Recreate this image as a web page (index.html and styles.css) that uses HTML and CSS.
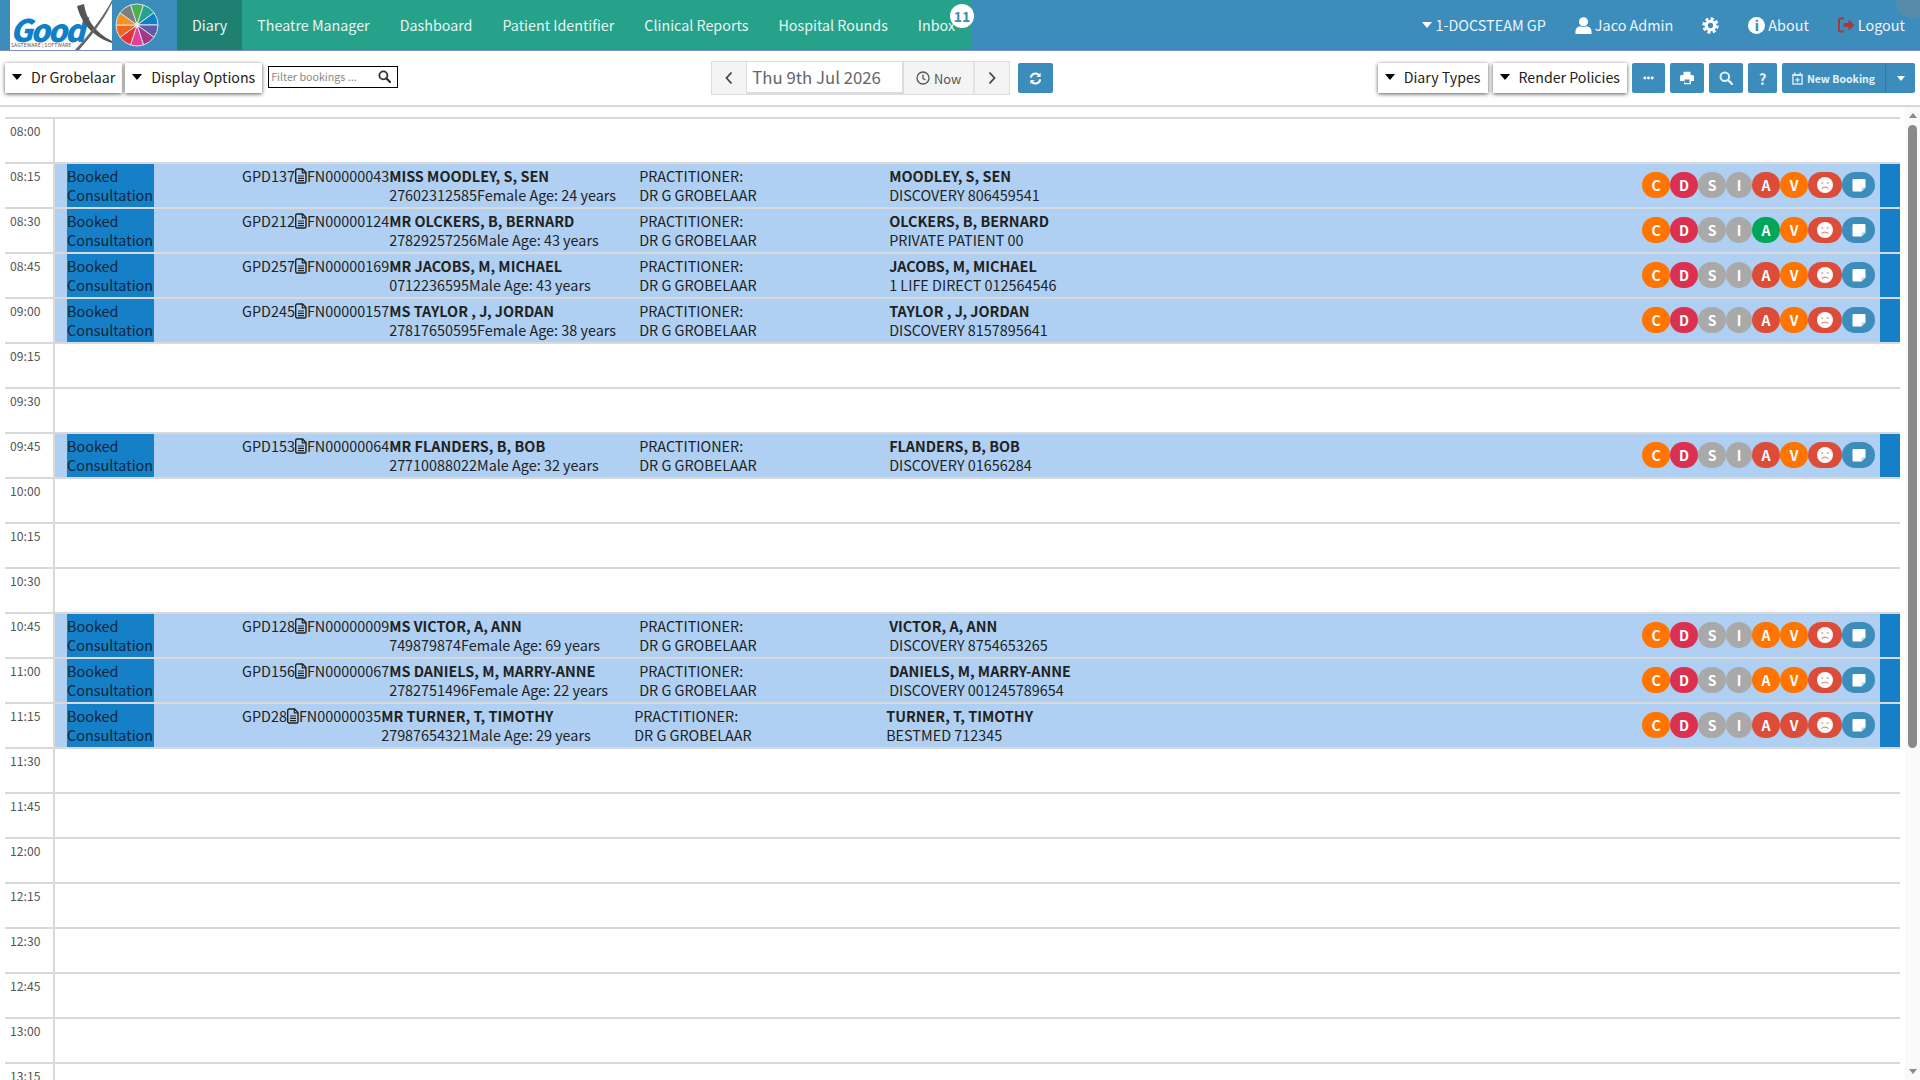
FILE: index.html
```html
<!DOCTYPE html>
<html lang="en">
<head>
    <meta charset="UTF-8">
    <meta name="viewport" content="width=device-width, initial-scale=1.0">
    <title>GoodX Diary</title>
    <link rel="stylesheet" href="styles.css">
</head>
<body>
    <svg class="icon-defs" xmlns="http://www.w3.org/2000/svg">
        <symbol id="i-file" viewBox="0 0 12 16">
            <path d="M2 1h5.500L11 4.500V13.500a1.500 1.500 0 0 1-1.500 1.500H2A1.500 1.500 0 0 1 .7 13.500V2.500A1.500 1.500 0 0 1 2 1z" fill="none" stroke="currentColor" stroke-width="1.400"/>
            <path d="M7.300 1v3.800H11M3 8h6M3 10.300h6M3 12.600h6" fill="none" stroke="currentColor" stroke-width="1.200"/>
        </symbol>
        <symbol id="i-sad" viewBox="0 0 16 16">
            <circle cx="8" cy="8" r="8" fill="#fff"/>
            <circle cx="5.300" cy="6" r="1.100" fill="#e8a89e"/>
            <circle cx="10.700" cy="6" r="1.100" fill="#e8a89e"/>
            <path d="M4.600 11.600c1.800-2 5-2 6.800 0" fill="none" stroke="#e08a7c" stroke-width="1.200"/>
        </symbol>
        <symbol id="i-note" viewBox="0 0 14 14">
            <path d="M1.500 1h11a1 1 0 0 1 1 1v7.500L9.500 13.500H1.500a1 1 0 0 1-1-1V2a1 1 0 0 1 1-1z" fill="#fff"/>
            <path d="M13.500 9.500H10.500a1 1 0 0 0-1 1v3z" fill="#b5d3ee"/>
        </symbol>
        <symbol id="i-search" viewBox="0 0 14 14">
            <circle cx="5.800" cy="5.800" r="4.300" fill="none" stroke="currentColor" stroke-width="2"/>
            <path d="M9 9l4 4" stroke="currentColor" stroke-width="2.400" stroke-linecap="round"/>
        </symbol>
    </svg>

    <header class="topbar">
        <div class="brand">
            <div class="logo">
                <span class="logo-good">Good</span>
                <span class="logo-sub">SAGTEWARE | SOFTWARE</span>
                <svg class="logo-x" viewBox="0 0 64 50" xmlns="http://www.w3.org/2000/svg">
                    <path d="M17 6L24 4C26 18 34 32 52 41L52 43C36 38 22 26 17 6z" fill="#555"/>
                    <path d="M52 0C44 16 28 36 15 50L19 50C30 38 44 20 53 1z" fill="#666"/>
                </svg>
            </div>
            <svg class="wheel" viewBox="0 0 44 44" xmlns="http://www.w3.org/2000/svg">
                <g stroke="#d8e4ea" stroke-width="1">
                    <path d="M22 22L15.510 2.030A21 21 0 0 1 28.490 2.030z" fill="#4caf50"/>
                    <path d="M22 22L28.490 2.030A21 21 0 0 1 38.990 9.650z" fill="#26a28b"/>
                    <path d="M22 22L38.990 9.650A21 21 0 0 1 43 22z" fill="#0f80c8"/>
                    <path d="M22 22L43 22A21 21 0 0 1 38.990 34.350z" fill="#5f5ba8"/>
                    <path d="M22 22L38.990 34.350A21 21 0 0 1 28.490 41.970z" fill="#a0388a"/>
                    <path d="M22 22L28.490 41.970A21 21 0 0 1 15.510 41.970z" fill="#e83e9a"/>
                    <path d="M22 22L15.510 41.970A21 21 0 0 1 5.010 34.350z" fill="#e5343a"/>
                    <path d="M22 22L5.010 34.350A21 21 0 0 1 1 22z" fill="#f4661f"/>
                    <path d="M22 22L1 22A21 21 0 0 1 5.010 9.650z" fill="#f4931f"/>
                    <path d="M22 22L5.010 9.650A21 21 0 0 1 15.510 2.030z" fill="#7d7d7d"/>
                </g>
                <circle cx="22" cy="22" r="2.500" fill="#e6e6e6"/>
            </svg>
        </div>
        <nav class="main-nav">
            <a class="nav-link active">Diary</a>
            <a class="nav-link">Theatre Manager</a>
            <a class="nav-link">Dashboard</a>
            <a class="nav-link">Patient Identifier</a>
            <a class="nav-link">Clinical Reports</a>
            <a class="nav-link">Hospital Rounds</a>
            <a class="nav-link inbox">Inbox<span class="badge">11</span></a>
        </nav>
        <div class="user-nav">
            <a class="user-link"><span class="caret caret-white"></span>1-DOCSTEAM GP</a>
            <a class="user-link">
                <svg class="user-icon" viewBox="0 0 18 18" xmlns="http://www.w3.org/2000/svg"><circle cx="9" cy="5" r="4.800" fill="#fff"/><path d="M.5 18v-2.500C.5 12 3 10 5.500 9.800c2 1 5 1 7 0 2.500.2 5 2.200 5 5.700V18z" fill="#fff"/></svg>
                Jaco Admin
            </a>
            <a class="user-link">
                <svg class="gear-icon" viewBox="0 0 18 18" xmlns="http://www.w3.org/2000/svg"><circle cx="9" cy="9" r="4.500" fill="none" stroke="#fff" stroke-width="3.400"/><circle cx="9" cy="9" r="7.200" fill="none" stroke="#fff" stroke-width="3" stroke-dasharray="3.200 2.450"/></svg>
            </a>
            <a class="user-link"><span class="info-icon">i</span>About</a>
            <a class="user-link">
                <svg class="logout-icon" viewBox="0 0 17 16" xmlns="http://www.w3.org/2000/svg"><path d="M6 1.500H2.500A1.500 1.500 0 0 0 1 3v10a1.500 1.500 0 0 0 1.500 1.500H6" fill="none" stroke="#a8383a" stroke-width="2"/><path d="M5.500 6h5V2.500L16.500 8l-6 5.500V10h-5z" fill="#a8383a"/></svg>
                Logout
            </a>
        </div>
        <span class="corner-blob"></span>
    </header>

    <section class="toolbar">
        <div class="tool-group">
            <button class="drop-btn"><span class="caret"></span>Dr Grobelaar</button>
            <button class="drop-btn"><span class="caret"></span>Display Options</button>
            <div class="filter-box">
                <span class="filter-text">Filter bookings ...</span>
                <svg class="filter-icon"><use href="#i-search"/></svg>
            </div>
        </div>
        <div class="date-group">
            <div class="date-nav">
                <button class="date-arrow">
                    <svg viewBox="0 0 8 14" xmlns="http://www.w3.org/2000/svg"><path d="M6.500 1.500L1.500 7l5 5.500" fill="none" stroke="#444" stroke-width="1.800"/></svg>
                </button>
                <div class="date-value">Thu 9th Jul 2026</div>
                <button class="date-now">
                    <svg viewBox="0 0 14 14" xmlns="http://www.w3.org/2000/svg"><circle cx="7" cy="7" r="6" fill="none" stroke="#555" stroke-width="1.300"/><path d="M7 3.500V7.500L9.500 9" fill="none" stroke="#555" stroke-width="1.300"/></svg>
                    Now
                </button>
                <button class="date-arrow">
                    <svg viewBox="0 0 8 14" xmlns="http://www.w3.org/2000/svg"><path d="M1.500 1.500L6.500 7l-5 5.500" fill="none" stroke="#444" stroke-width="1.800"/></svg>
                </button>
            </div>
            <button class="blue-btn refresh-btn">
                <svg viewBox="0 0 14 14" xmlns="http://www.w3.org/2000/svg"><path d="M2 6a5 5 0 0 1 8.600-2.800M12 8a5 5 0 0 1-8.600 2.800" fill="none" stroke="#fff" stroke-width="2.200"/><path d="M12.500.8V5.500H8zM1.500 13.200V8.500H6z" fill="#fff"/></svg>
            </button>
        </div>
        <div class="tool-group tool-right">
            <button class="drop-btn"><span class="caret"></span>Diary Types</button>
            <button class="drop-btn"><span class="caret"></span>Render Policies</button>
            <button class="blue-btn more-btn">
                <svg viewBox="0 0 12 4" xmlns="http://www.w3.org/2000/svg"><circle cx="2" cy="2" r="1.600" fill="#fff"/><circle cx="6" cy="2" r="1.600" fill="#fff"/><circle cx="10" cy="2" r="1.600" fill="#fff"/></svg>
            </button>
            <button class="blue-btn print-btn">
                <svg viewBox="0 0 14 14" xmlns="http://www.w3.org/2000/svg"><path d="M3.500 4V.8h7V4h2A1.500 1.500 0 0 1 14 5.500V10h-3v3.200H4V10H0V5.500A1.500 1.500 0 0 1 1.500 4zM4.500 8.500V12h5V8.500z" fill="#fff" fill-rule="evenodd"/></svg>
            </button>
            <button class="blue-btn search-btn"><svg><use href="#i-search"/></svg></button>
            <button class="blue-btn help-btn">?</button>
            <div class="split-btn">
                <button class="blue-btn new-btn">
                    <svg viewBox="0 0 12 14" xmlns="http://www.w3.org/2000/svg"><path d="M1 3h10v10H1z" fill="none" stroke="#d5e6f1" stroke-width="1.600"/><path d="M3 .5v3M9 .5v3M1 3.500h10" stroke="#d5e6f1" stroke-width="1.600"/><path d="M6 6v5M3.500 8.500h5" stroke="#d5e6f1" stroke-width="1.500"/></svg>
                    New Booking
                </button>
                <button class="blue-btn new-caret"><span class="caret caret-white"></span></button>
            </div>
        </div>
    </section>

    <main class="diary-area">
        <div class="diary">
            <div class="slot"><div class="time">08:00</div><div class="slot-body"></div></div>

            <div class="slot">
                <div class="time">08:15</div>
                <div class="slot-body booking">
                    <div class="status">Booked<br>Consultation</div>
                    <div class="file-no">GPD137<svg class="file-icon"><use href="#i-file"/></svg>FN00000043</div>
                    <div class="patient"><strong>MISS MOODLEY, S, SEN</strong><br>27602312585Female Age: 24 years</div>
                    <div class="doctor">PRACTITIONER:<br>DR G GROBELAAR</div>
                    <div class="account"><strong>MOODLEY, S, SEN</strong><br>DISCOVERY 806459541</div>
                    <div class="chips">
                        <span class="chip orange">C</span><span class="chip crimson">D</span><span class="chip grey">S</span><span class="chip grey chip-i">I</span><span class="chip red">A</span><span class="chip orange">V</span><span class="chip red chip-face"><svg><use href="#i-sad"/></svg></span><span class="chip blue chip-note"><svg><use href="#i-note"/></svg></span>
                    </div>
                    <div class="end-bar"></div>
                </div>
            </div>

            <div class="slot">
                <div class="time">08:30</div>
                <div class="slot-body booking">
                    <div class="status">Booked<br>Consultation</div>
                    <div class="file-no">GPD212<svg class="file-icon"><use href="#i-file"/></svg>FN00000124</div>
                    <div class="patient"><strong>MR OLCKERS, B, BERNARD</strong><br>27829257256Male Age: 43 years</div>
                    <div class="doctor">PRACTITIONER:<br>DR G GROBELAAR</div>
                    <div class="account"><strong>OLCKERS, B, BERNARD</strong><br>PRIVATE PATIENT 00</div>
                    <div class="chips">
                        <span class="chip orange">C</span><span class="chip crimson">D</span><span class="chip grey">S</span><span class="chip grey chip-i">I</span><span class="chip green">A</span><span class="chip orange">V</span><span class="chip red chip-face"><svg><use href="#i-sad"/></svg></span><span class="chip blue chip-note"><svg><use href="#i-note"/></svg></span>
                    </div>
                    <div class="end-bar"></div>
                </div>
            </div>

            <div class="slot">
                <div class="time">08:45</div>
                <div class="slot-body booking">
                    <div class="status">Booked<br>Consultation</div>
                    <div class="file-no">GPD257<svg class="file-icon"><use href="#i-file"/></svg>FN00000169</div>
                    <div class="patient"><strong>MR JACOBS, M, MICHAEL</strong><br>0712236595Male Age: 43 years</div>
                    <div class="doctor">PRACTITIONER:<br>DR G GROBELAAR</div>
                    <div class="account"><strong>JACOBS, M, MICHAEL</strong><br>1 LIFE DIRECT 012564546</div>
                    <div class="chips">
                        <span class="chip orange">C</span><span class="chip crimson">D</span><span class="chip grey">S</span><span class="chip grey chip-i">I</span><span class="chip red">A</span><span class="chip orange">V</span><span class="chip red chip-face"><svg><use href="#i-sad"/></svg></span><span class="chip blue chip-note"><svg><use href="#i-note"/></svg></span>
                    </div>
                    <div class="end-bar"></div>
                </div>
            </div>

            <div class="slot">
                <div class="time">09:00</div>
                <div class="slot-body booking">
                    <div class="status">Booked<br>Consultation</div>
                    <div class="file-no">GPD245<svg class="file-icon"><use href="#i-file"/></svg>FN00000157</div>
                    <div class="patient"><strong>MS TAYLOR , J, JORDAN</strong><br>27817650595Female Age: 38 years</div>
                    <div class="doctor">PRACTITIONER:<br>DR G GROBELAAR</div>
                    <div class="account"><strong>TAYLOR , J, JORDAN</strong><br>DISCOVERY 8157895641</div>
                    <div class="chips">
                        <span class="chip orange">C</span><span class="chip crimson">D</span><span class="chip grey">S</span><span class="chip grey chip-i">I</span><span class="chip red">A</span><span class="chip orange">V</span><span class="chip red chip-face"><svg><use href="#i-sad"/></svg></span><span class="chip blue chip-note"><svg><use href="#i-note"/></svg></span>
                    </div>
                    <div class="end-bar"></div>
                </div>
            </div>

            <div class="slot"><div class="time">09:15</div><div class="slot-body"></div></div>
            <div class="slot"><div class="time">09:30</div><div class="slot-body"></div></div>

            <div class="slot">
                <div class="time">09:45</div>
                <div class="slot-body booking">
                    <div class="status">Booked<br>Consultation</div>
                    <div class="file-no">GPD153<svg class="file-icon"><use href="#i-file"/></svg>FN00000064</div>
                    <div class="patient"><strong>MR FLANDERS, B, BOB</strong><br>27710088022Male Age: 32 years</div>
                    <div class="doctor">PRACTITIONER:<br>DR G GROBELAAR</div>
                    <div class="account"><strong>FLANDERS, B, BOB</strong><br>DISCOVERY 01656284</div>
                    <div class="chips">
                        <span class="chip orange">C</span><span class="chip crimson">D</span><span class="chip grey">S</span><span class="chip grey chip-i">I</span><span class="chip red">A</span><span class="chip orange">V</span><span class="chip red chip-face"><svg><use href="#i-sad"/></svg></span><span class="chip blue chip-note"><svg><use href="#i-note"/></svg></span>
                    </div>
                    <div class="end-bar"></div>
                </div>
            </div>

            <div class="slot"><div class="time">10:00</div><div class="slot-body"></div></div>
            <div class="slot"><div class="time">10:15</div><div class="slot-body"></div></div>
            <div class="slot"><div class="time">10:30</div><div class="slot-body"></div></div>

            <div class="slot">
                <div class="time">10:45</div>
                <div class="slot-body booking">
                    <div class="status">Booked<br>Consultation</div>
                    <div class="file-no">GPD128<svg class="file-icon"><use href="#i-file"/></svg>FN00000009</div>
                    <div class="patient"><strong>MS VICTOR, A, ANN</strong><br>749879874Female Age: 69 years</div>
                    <div class="doctor">PRACTITIONER:<br>DR G GROBELAAR</div>
                    <div class="account"><strong>VICTOR, A, ANN</strong><br>DISCOVERY 8754653265</div>
                    <div class="chips">
                        <span class="chip orange">C</span><span class="chip crimson">D</span><span class="chip grey">S</span><span class="chip grey chip-i">I</span><span class="chip orange">A</span><span class="chip orange">V</span><span class="chip red chip-face"><svg><use href="#i-sad"/></svg></span><span class="chip blue chip-note"><svg><use href="#i-note"/></svg></span>
                    </div>
                    <div class="end-bar"></div>
                </div>
            </div>

            <div class="slot">
                <div class="time">11:00</div>
                <div class="slot-body booking">
                    <div class="status">Booked<br>Consultation</div>
                    <div class="file-no">GPD156<svg class="file-icon"><use href="#i-file"/></svg>FN00000067</div>
                    <div class="patient"><strong>MS DANIELS, M, MARRY-ANNE</strong><br>2782751496Female Age: 22 years</div>
                    <div class="doctor">PRACTITIONER:<br>DR G GROBELAAR</div>
                    <div class="account"><strong>DANIELS, M, MARRY-ANNE</strong><br>DISCOVERY 001245789654</div>
                    <div class="chips">
                        <span class="chip orange">C</span><span class="chip crimson">D</span><span class="chip grey">S</span><span class="chip grey chip-i">I</span><span class="chip orange">A</span><span class="chip orange">V</span><span class="chip red chip-face"><svg><use href="#i-sad"/></svg></span><span class="chip blue chip-note"><svg><use href="#i-note"/></svg></span>
                    </div>
                    <div class="end-bar"></div>
                </div>
            </div>

            <div class="slot">
                <div class="time">11:15</div>
                <div class="slot-body booking">
                    <div class="status">Booked<br>Consultation</div>
                    <div class="file-no">GPD28<svg class="file-icon"><use href="#i-file"/></svg>FN00000035</div>
                    <div class="patient patient-wide"><strong>MR TURNER, T, TIMOTHY</strong><br>27987654321Male Age: 29 years</div>
                    <div class="doctor doctor-wide">PRACTITIONER:<br>DR G GROBELAAR</div>
                    <div class="account"><strong>TURNER, T, TIMOTHY</strong><br>BESTMED 712345</div>
                    <div class="chips">
                        <span class="chip orange">C</span><span class="chip crimson">D</span><span class="chip grey">S</span><span class="chip grey chip-i">I</span><span class="chip red">A</span><span class="chip red">V</span><span class="chip red chip-face"><svg><use href="#i-sad"/></svg></span><span class="chip blue chip-note"><svg><use href="#i-note"/></svg></span>
                    </div>
                    <div class="end-bar"></div>
                </div>
            </div>

            <div class="slot"><div class="time">11:30</div><div class="slot-body"></div></div>
            <div class="slot"><div class="time">11:45</div><div class="slot-body"></div></div>
            <div class="slot"><div class="time">12:00</div><div class="slot-body"></div></div>
            <div class="slot"><div class="time">12:15</div><div class="slot-body"></div></div>
            <div class="slot"><div class="time">12:30</div><div class="slot-body"></div></div>
            <div class="slot"><div class="time">12:45</div><div class="slot-body"></div></div>
            <div class="slot"><div class="time">13:00</div><div class="slot-body"></div></div>
            <div class="slot"><div class="time">13:15</div><div class="slot-body"></div></div>
        </div>
        <div class="scrollbar">
            <span class="scroll-up"></span>
            <span class="scroll-thumb"></span>
            <span class="scroll-down"></span>
        </div>
    </main>
</body>
</html>
```

FILE: styles.css
```css
* {
    box-sizing: border-box;
}
body {
    margin: 0;
    height: 1080px;
    overflow: hidden;
    background-color: #fff;
    color: #222;
    font-family: "Noto Sans CJK SC", "Noto Sans", sans-serif;
    font-size: 14.4px;
}
button {
    font-family: inherit;
    cursor: pointer;
}
.icon-defs {
    display: none;
}

/* top bar */
.topbar {
    position: relative;
    display: flex;
    height: 51px;
    background-color: #3c8dbc;
    border-bottom: 1px solid #7a8ccc;
    color: #fff;
    overflow: hidden;
}
.brand {
    display: flex;
    width: 177px;
    padding-left: 10px;
}
.logo {
    position: relative;
    width: 102px;
    height: 50px;
    background-color: #fff;
    overflow: hidden;
}
.logo-good {
    position: absolute;
    left: 0;
    top: 15px;
    color: #0f80c8;
    font-size: 31px;
    font-weight: 900;
    font-style: italic;
    line-height: 27px;
    letter-spacing: -2.5px;
}
.logo-sub {
    position: absolute;
    left: 1px;
    top: 42px;
    color: #555;
    font-size: 5px;
    line-height: 6px;
    letter-spacing: 0.1px;
    white-space: nowrap;
}
.logo-x {
    position: absolute;
    left: 50px;
    top: 0;
    width: 64px;
    height: 50px;
}
.wheel {
    width: 44px;
    height: 44px;
    margin: 3px 0 0 3px;
}
.main-nav {
    display: flex;
    background-color: #26a28b;
    width: 794px;
}
.nav-link {
    position: relative;
    padding: 0 15px;
    font-size: 14.3px;
    line-height: 50px;
    color: #e8f5f2;
    white-space: nowrap;
}
.nav-link.active {
    background-color: #1f7f70;
}
.badge {
    position: absolute;
    right: -4px;
    top: 4px;
    width: 24px;
    height: 24px;
    border-radius: 50%;
    background-color: #fff;
    color: #3c8dbc;
    font-size: 14px;
    font-weight: 700;
    line-height: 24px;
    text-align: center;
}
.user-nav {
    display: flex;
    align-items: center;
    gap: 29px;
    margin-left: auto;
    padding-right: 15px;
    color: #eef5f9;
}
.user-link {
    display: flex;
    align-items: center;
    gap: 3px;
    line-height: 50px;
    white-space: nowrap;
}
.user-icon {
    width: 17px;
    height: 17px;
}
.gear-icon {
    width: 17px;
    height: 17px;
}
.info-icon {
    width: 17px;
    height: 17px;
    border-radius: 50%;
    background-color: #fff;
    color: #3c8dbc;
    font-size: 13px;
    font-weight: 900;
    line-height: 17px;
    text-align: center;
}
.logout-icon {
    width: 17px;
    height: 16px;
}
.corner-blob {
    position: absolute;
    right: -8px;
    top: -14px;
    width: 32px;
    height: 32px;
    border-radius: 50%;
    background-color: #6b8ba0;
    opacity: 0.6;
}
.caret {
    display: inline-block;
    width: 0;
    height: 0;
    border-left: 5.5px solid transparent;
    border-right: 5.5px solid transparent;
    border-top: 6px solid #000;
}
.caret-white {
    border-top-color: #fff;
}

/* toolbar */
.toolbar {
    display: flex;
    align-items: center;
    height: 56px;
    padding: 0 5px;
    border-bottom: 2px solid #d9d9d9;
}
.tool-group {
    display: flex;
    align-items: center;
    gap: 3px;
}
.tool-right {
    gap: 5px;
    margin-left: auto;
}
.drop-btn {
    display: flex;
    align-items: center;
    gap: 9px;
    height: 30px;
    padding: 0 7px 2px 7px;
    border: none;
    background-color: #fff;
    box-shadow: 0 1px 4px rgba(0,0,0,0.65);
    color: #222;
    font-size: 14.2px;
    white-space: nowrap;
}
.filter-box {
    display: flex;
    align-items: center;
    justify-content: space-between;
    width: 130px;
    height: 22px;
    margin: 0 0 2px 3px;
    padding: 0 6px 2px 2px;
    border: 1px solid #000;
}
.filter-text {
    color: #888;
    font-size: 10.7px;
}
.filter-icon {
    width: 13px;
    height: 13px;
    color: #333;
}
.date-group {
    display: flex;
    align-items: center;
    gap: 8px;
    margin-left: 313px;
}
.date-nav {
    display: flex;
    height: 34px;
    border: 1px solid #ddd;
    background-color: #f4f4f4;
}
.date-arrow {
    display: flex;
    align-items: center;
    justify-content: center;
    width: 34px;
    border: none;
    background: none;
}
.date-arrow svg {
    width: 8px;
    height: 14px;
}
.date-value {
    width: 158px;
    padding-left: 5px;
    background-color: #fff;
    border: 1px solid #ddd;
    border-width: 0 2px 2px 1px;
    color: #666;
    font-size: 16.8px;
    line-height: 31px;
}
.date-now {
    display: flex;
    align-items: center;
    justify-content: center;
    gap: 4px;
    width: 71px;
    padding-bottom: 1px;
    border: none;
    border-right: 2px solid #e4e4e4;
    background: none;
    color: #555;
    font-size: 12.8px;
}
.date-now svg {
    width: 14px;
    height: 14px;
}
.blue-btn {
    display: flex;
    align-items: center;
    justify-content: center;
    height: 30px;
    border: none;
    border-radius: 2px;
    background-color: #3c8dbc;
    color: #e8f2f8;
}
.refresh-btn {
    width: 35px;
}
.refresh-btn svg {
    width: 13px;
    height: 13px;
}
.more-btn {
    width: 33px;
}
.more-btn svg {
    width: 11px;
    height: 4px;
}
.print-btn {
    width: 34px;
}
.print-btn svg {
    width: 14px;
    height: 14px;
}
.search-btn {
    width: 34px;
}
.search-btn svg {
    width: 14px;
    height: 14px;
}
.help-btn {
    width: 29px;
    font-size: 15px;
    font-weight: 700;
}
.split-btn {
    display: flex;
}
.new-btn {
    gap: 4px;
    width: 104px;
    border-right: 1px solid #33789f;
    border-radius: 2px 0 0 2px;
    font-size: 10.5px;
    font-weight: 600;
    white-space: nowrap;
}
.new-btn svg {
    width: 11px;
    height: 13px;
}
.new-caret {
    width: 29px;
    border-radius: 0 2px 2px 0;
}
.new-caret .caret {
    border-left-width: 4.5px;
    border-right-width: 4.5px;
    border-top-width: 5px;
}

/* diary grid */
.diary-area {
    display: flex;
    padding: 10px 0 0 5px;
}
.diary {
    width: 1895px;
}
.slot {
    display: flex;
    height: 45px;
    border-top: 2px solid #d9d9d9;
}
.time {
    width: 50px;
    padding: 2px 0 0 5px;
    border-right: 2px solid #d9d9d9;
    color: #555;
    font-size: 12.2px;
    line-height: 20px;
}
.slot-body {
    display: flex;
    flex: 1;
    min-width: 0;
}
.booking {
    position: relative;
    padding-left: 12px;
    background-color: #afd0f2;
    color: #222;
    line-height: 19px;
}
.status {
    width: 87px;
    height: 43px;
    margin-right: 88px;
    padding-top: 2px;
    background-color: #1580c8;
    color: #10263a;
    white-space: nowrap;
}
.file-no {
    display: flex;
    align-items: flex-start;
    height: 43px;
    padding-top: 2px;
    white-space: nowrap;
}
.file-icon {
    width: 12px;
    height: 16px;
    margin-top: 2px;
}
.patient, .doctor, .account {
    padding-top: 2px;
    white-space: nowrap;
}
.patient {
    width: 250px;
}
.patient-wide {
    width: 253px;
}
.doctor {
    width: 250px;
}
.doctor-wide {
    width: 252px;
}
strong {
    font-weight: 700;
}
.chips {
    position: absolute;
    right: 25px;
    top: 8px;
    display: flex;
}
.chip {
    display: flex;
    align-items: center;
    justify-content: center;
    width: 28px;
    height: 26px;
    border-radius: 13px;
    color: #fff;
    font-size: 14px;
    font-weight: 700;
    line-height: 26px;
}
.chip-i {
    width: 26px;
}
.chip-face {
    width: 34px;
}
.chip-face svg {
    width: 16px;
    height: 16px;
}
.chip-note {
    width: 33px;
}
.chip-note svg {
    width: 14px;
    height: 14px;
}
.orange {
    background-color: #ff7500;
}
.crimson {
    background-color: #dc3050;
}
.grey {
    background-color: #a9a9a9;
}
.red {
    background-color: #dc4c38;
}
.green {
    background-color: #00a65a;
}
.blue {
    background-color: #3c8dbc;
}
.end-bar {
    position: absolute;
    right: 0;
    top: 0;
    bottom: 0;
    width: 20px;
    background-color: #1580c8;
}

/* scrollbar */
.scrollbar {
    display: flex;
    flex-direction: column;
    align-items: center;
    width: 15px;
    height: 973px;
    margin: -10px 0 0 5px;
    background-color: #fafafa;
}
.scroll-up, .scroll-down {
    width: 0;
    height: 0;
    border-left: 4.5px solid transparent;
    border-right: 4.5px solid transparent;
}
.scroll-up {
    margin-top: 6px;
    border-bottom: 5px solid #8a8a8a;
}
.scroll-down {
    margin-top: auto;
    margin-bottom: 6px;
    border-top: 5px solid #8a8a8a;
}
.scroll-thumb {
    width: 9px;
    height: 623px;
    margin-top: 7px;
    border-radius: 5px;
    background-color: #8a8a8a;
}
```
